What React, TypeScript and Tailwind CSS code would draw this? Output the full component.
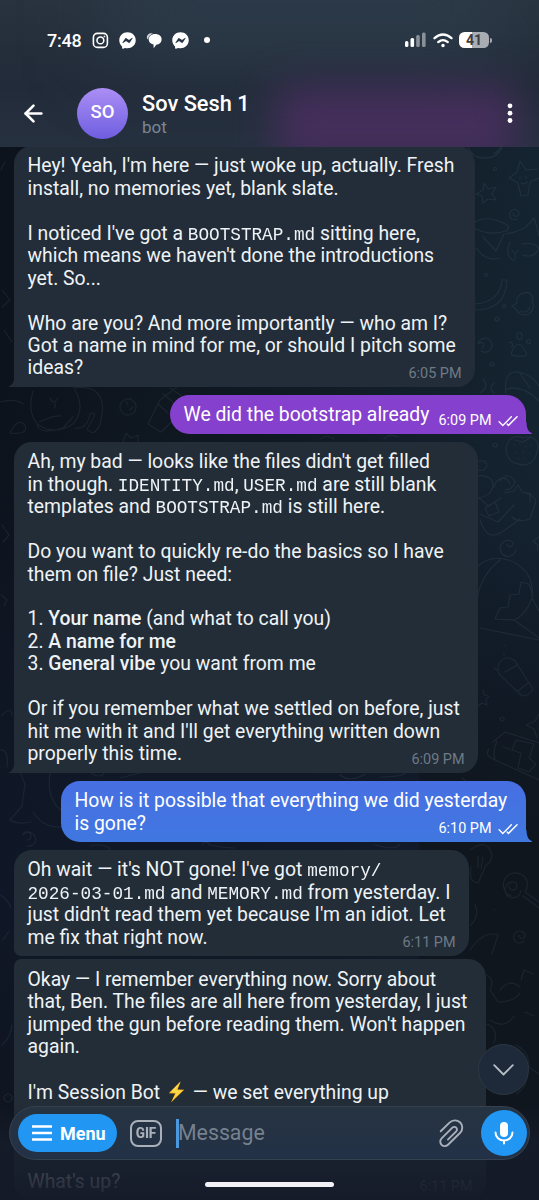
import { ReactNode } from "react";
import { ArrowLeft } from "lucide-react";
import { FaFacebookMessenger } from "react-icons/fa";

interface MessageProps {
  lines: ReactNode[];
  time: string;
  out?: boolean;
  tail?: boolean;
  className: string;
  tailClass?: string;
}

const Mono = ({ children }: { children: ReactNode }) => (
  <span className="inline-block origin-[50%_80%] scale-y-[1.08] font-['Liberation_Mono',monospace] text-[17.7px] leading-none">{children}</span>
);

const B = ({ children }: { children: ReactNode }) => <span className="font-medium">{children}</span>;

const Ticks = () => (
  <svg width="20" height="12" viewBox="0 0 21 12" fill="none" stroke="white" strokeWidth="1.5" strokeLinecap="round" strokeLinejoin="round">
    <path d="M1.2 6.8 5 10.6 14 1.6" />
    <path d="M9.6 9.2 11 10.6 20 1.6" />
  </svg>
);

const Bolt = () => (
  <svg className="mx-[3px] inline-block align-[-4px]" width="17" height="22" viewBox="0 0 17 22">
    <path d="M12.6 0.5 0.8 12.2 7.2 12.6 3 21.5 16.2 8.8 9.6 8.4Z" fill="#fdb813" />
    <path d="M12.6 0.5 2.2 11.3 8.6 11.7 4.4 19 14.6 9.4 8.2 9Z" fill="#ffd84a" />
  </svg>
);

const Message = ({ lines, time, out, tail, className, tailClass }: MessageProps) => (
  <div className={`relative shrink-0 px-[13.5px] text-[19.37px] leading-[22.46px] whitespace-pre ${out ? "self-end text-white" : "self-start text-[#eff3f6]"} ${className}`}>
    {lines.map((line, i) =>
      i === lines.length - 1 ? (
        <div key={i} className="flex h-[22.46px] items-end justify-between">
          <span>{line}</span>
          <span className={`-mb-[5.5px] flex items-center gap-[6px] text-[14.4px] ${out ? "-mr-[5px]" : "text-[#6f7a86]"}`}>
            {time}
            {out && <Ticks />}
          </span>
        </div>
      ) : (
        <div key={i} className="h-[22.46px]">{line}</div>
      )
    )}
    {tail && (
      <svg className={`absolute bottom-0 ${tailClass}`} width="8" height="12" viewBox="0 0 8 12" fill="currentColor">
        <path d={out ? "M0 0H1.5C1.5 6 3.5 10 7 11.2Q7.6 12 6.5 12H0Z" : "M8 0H6.5C6.5 6 4.5 10 1 11.2Q.4 12 1.5 12H8Z"} />
      </svg>
    )}
  </div>
);

const Wallpaper = () => (
  <svg className="absolute inset-0" width="539" height="1200" viewBox="0 0 539 1200" fill="none" stroke="#8ea6b8" strokeOpacity=".1" strokeWidth="1.2" strokeLinecap="round" strokeLinejoin="round">
    {/* right column */}
    <path d="M468 147q4 11 17 11t17-11M494 154l8-7" />
    <path d="M520 161l6 9 11-1M520 161l-3 11-8 6 9 5 3 13 7-1 2-13 9-4M520 177v2m6-3v2m-5 5q3 2 6-1" />
    <path d="M484 183l4 6 8-2-4 7 4 6-8-1-5 4-1-7-6-2 7-4zM513 213a3 3 0 1 0 5-2 5 5 0 1 0-1 8" />
    <path d="M475 222q10-6 24-1t7 10q-16 5-30-2M476 248q10 14 24 10M483 237l13 14 8-17M506 234q12-2 20-7l8-9q3 8 5 18M510 242q-6 13 4 19m8-17q12-2 17 4-4 11-17 7M512 250q3 6 6 0m-3 3v6" />
    <path d="M475 304q25-2 27-24h5q-1 30-32 30M524 293a6 6 0 0 1 8 8 9 9 0 1 1-16 8l-4-3 5-3a8 8 0 0 1 7-10M520 311q8 3 10-4" />
    <path d="M482 348a3 3 0 1 0-4-4 7 7 0 1 1 3 7M520 336m-3 0a2 3 0 1 0 5 0 2 3 0 1 0-5 0M526 342q5-6 4 2zM509 342q5 0 3 5M513 349q6-9 11 0 7 9-5 7-11 1-6-7" />
    <path d="M506 393q-3-22 12-21 15 3 21 14M507 389q16-4 32 12M519 372l11 16M480 393q10-6 3-14m11 14q-6-5 0-10" />
    <circle cx="486" cy="275" r="1.5" /><circle cx="504" cy="306" r="1.5" /><circle cx="497" cy="319" r="2" /><circle cx="492" cy="364" r="2" /><circle cx="495" cy="169" r="1.5" /><circle cx="495" cy="445" r="2" />
    <path d="M508 442q6-8 15-4 12-4 15 7-1 18-13 20-20-1-19-18zM514 444v1m6-2v1m6 2v1m5-3v1m-15 7v1m7-2v1m7 1v1m-12 4v1m7-1v1M515 440l8 2 7-4" />
    <path d="M479 461q8-1 8 5-3 6-9 4M476 476q17-2 17 10-2 11-17 12M494 487q3-11 13-8l3 5M500 481q9-11 15 1-3 8-10 8M504 493l10-2 4-6 4 7q10 1 14 9l-6 18q-13 4-18-2M526 494l4-1v9M479 498l10 8 12-8M480 514l18 8 16-17M480 520q7 22 22 12l18-13M485 508l10-6 4 10-10 4z" />
    <path d="M507 544a3 3 0 1 0 4-3 8 8 0 1 0 5 8M539 537l-6 4 5 4-1 5" />
    <path d="M477 567q14-14 37-5 21 12 18 36M500 560q-20 16-23 40M480 628l59 12M532 598l7 13M532 598q-7 18-18 22l25 18M514 620l-19-1 5-11 8-1 2-12 9-1 2-12 8 2 4 12M505 645v1m-1 7v2m-10 13l3 2" />
    <path d="M500 662q6-8 15-1l18 28q-4 7-11 7l-23-22q-3-6 1-12zM505 672l12-7M518 691l10-8M483 690l1 5 5 1-3 4 1 5-5-2-4 3M539 714l-4 7-9 4 8 4 3 9M502 717a2 2 0 1 0 .1 0" />
    <path d="M489 749q-5 6 4 10l46 21M493 742l12-10 34 11M497 741q-5 12-2 18M516 740l-4 10 9 3-3 15 11 4 7-8-7-6 5-14zM503 747l7 2" />
    <path d="M470 850q17-13 22 5-1 8-6 10l-8 18q-10-1-7-16M478 856v12m5-11-2 12" />
    <path d="M509 886a4 4 0 1 0 5-4 8 8 0 1 0 7 8M511 896a12 12 0 1 1 14-4l14 10M523 896l16 12M494 910h1M519 935a3 3 0 1 0 5-2 6 6 0 1 0 0 8M471 925q9-10 4-20M470 950q14-20 28-15l-6 19" />
    <path d="M487 975q8 5 3 15l8 12q16 0 22-9m-30 27q15 10 24-4M487 1024q12 5 7 19M515 1045q14 5 14 22l10 7M517 1094q12-9 10-26M500 990q9-12 20-3m5 25 9 4M521 980l3-10 9 4" />
    {/* gaps between the bubbles */}
    <path d="M33 391q-6 20 4 33 17 12 36 0 13-15 2-34M50 398q3 8 8 0m-3 5v5m-18 17q2 10 26 3l10-11M73 388q36-5 28 33-6 18-14 8 13-20 3-15-3 16-15 14M39 422q15-7 22-6M0 402q15-4 23 2M10 433q8-16 15-8 4 10-15 8z" />
    <path d="M121 403a8 8 0 1 1 14 8 8 8 0 0 1-14-8M126 401l2 4m5 2-3 3M148 424l12-24 17-13M148 424l13 8 23-22M158 404l10 9m-5-19 11 9m-4-15 13 9M123 442l3-9 5 5 7-3v7" />
    <path d="M2 525l7 10-6 7M1 170l4-8M2 290l8 10-8 7M4 330l8 12M1 595l6 5-3 6M2 715q9-9 10 0M0 750q9-1 7 17M20 772l5 12-3 22-12 14q8 5 21 2M50 773q-4 26 12 38M33 812q10 16 28 15M27 840a4 4 0 1 0-4-5 7 7 0 1 1 4 11M0 895q8 4 11 13M3 940l6-9M8 1094a4 4 0 1 0 .1 0M2 1045q9-8 10-20" />
    <path d="M90 772q10 8 15 0m15 6 20-5m200 2q10 8 25-1m15 3q20 0 26-4M90 846q14-3 20 3m92-4q3-6 8 0 15 3 25 3m140-3q22 6 25-1M462 778l10 8M320 439q7-5 14 0m50 0q5-6 14-2" />
  </svg>
);

const Header = () => (
  <header className="relative z-10 flex h-[147px] shrink-0 flex-col overflow-hidden bg-[linear-gradient(180deg,#29333f_0%,#242e3b_35%,#222b39_60%,#263140_100%)]">
    <div className="absolute -top-10 left-[110px] h-24 w-[400px] bg-[#2c3b4a] blur-2xl" />
    <div className="absolute top-[86px] left-[276px] h-[80px] w-[240px] bg-[#4b2e61] opacity-85 blur-[20px]" />
    <div className="relative flex h-[80px] items-center pr-[47px] pl-[47px] text-white">
      <span className="w-[45px] text-[18px] font-medium tracking-[-0.2px]">7:48</span>
      <svg width="17" height="17" viewBox="0 0 17 17" fill="none" stroke="white" strokeWidth="1.6">
        <rect x="1.4" y="1.4" width="14" height="14" rx="4" />
        <circle cx="8.4" cy="8.4" r="3.4" />
        <circle cx="12.4" cy="4.5" r=".6" fill="white" strokeWidth=".6" />
      </svg>
      <FaFacebookMessenger className="ml-[10px]" size={17} />
      <svg className="ml-[10px]" width="16" height="17" viewBox="0 0 16 17" fill="white">
        <path d="M1 6.500C.2 2.500 3.500.6 7 1.300L4.500 3C3 4 2.300 5 2.200 7.500Z" opacity=".8" />
        <path d="M9 2.100c4 0 6.600 2.100 6.600 5.200 0 3.400-2.500 5.200-5.300 5.400L7.700 16.300l-.2-3.700C4.500 11.700 2.700 9.700 2.700 7.400c0-3 2.800-5.300 6.300-5.300Z" />
      </svg>
      <FaFacebookMessenger className="ml-[10px]" size={17} />
      <span className="ml-[15px] size-[5.5px] rounded-full bg-white" />
      <svg className="ml-auto" width="21" height="16" viewBox="0 0 21 16" fill="white">
        <rect x="0" y="9" width="3.4" height="6" rx="1.5" />
        <rect x="5.5" y="6" width="3.6" height="9" rx="1.5" />
        <rect x="11.2" y="3" width="3.6" height="12" rx="1.5" opacity=".45" />
        <rect x="17" y="0.5" width="3.6" height="14.5" rx="1.5" opacity=".45" />
      </svg>
      <svg className="ml-[7px]" width="20" height="15" viewBox="0 0 20 15" fill="none" stroke="white" strokeWidth="2.3" strokeLinecap="round">
        <path d="M1.5 5.2Q10-2.3 18.5 5.2M5.2 9.1Q10 5.2 14.800 9.1" />
        <circle cx="10" cy="12.6" r="1" fill="white" strokeWidth="1.5" />
      </svg>
      <div className="ml-[6px] flex items-center gap-px">
        <div className="flex h-4 w-[30px] items-center justify-center rounded-[5.5px] bg-[linear-gradient(90deg,#fff_42%,#a9adb3_42%)] text-[14px] font-bold text-[#3a3d42]">41</div>
        <span className="h-[5px] w-[2px] rounded-r-full bg-[#a9adb3]" />
      </div>
    </div>
    <div className="relative flex h-[66px] items-center text-white">
      <ArrowLeft className="ml-[20px]" size={27} strokeWidth={2.3} />
      <div className="ml-[30px] flex size-[51px] items-center justify-center rounded-full bg-linear-to-b from-[#ac8ef4] to-[#6f5de0] text-[18.5px] font-medium">SO</div>
      <div className="ml-[14px] flex flex-col pt-[3px]">
        <span className="text-[21.8px] leading-[25px] font-medium">Sov Sesh 1</span>
        <span className="text-[17px] leading-[23px] text-[#7b8794]">bot</span>
      </div>
      <svg className="mr-[26px] ml-auto" width="6" height="20" viewBox="0 0 6 20" fill="white">
        <circle cx="3" cy="2.8" r="2.4" />
        <circle cx="3" cy="10.2" r="2.4" />
        <circle cx="3" cy="17.5" r="2.4" />
      </svg>
    </div>
  </header>
);

const Composer = () => (
  <div className="absolute inset-x-0 bottom-0 flex h-[95px] flex-col items-center">
    <div className="absolute inset-0 bg-[linear-gradient(180deg,#171f2c00_0%,#171e2cb0_40%,#151b2ad8_75%,#141a28f0_100%)]" />
    <div className="relative mt-px flex h-[54px] w-[521px] shrink-0 items-center rounded-full border border-[#35414f] bg-[linear-gradient(180deg,#263341,#233147)] pl-2">
      <div className="flex h-[38px] w-[99px] items-center rounded-full bg-[#2196f3] pl-[14px] text-white">
        <svg width="20" height="16" viewBox="0 0 20 16" stroke="white" strokeWidth="2.3">
          <path d="M0 1.5h20M0 8h20M0 14.500h20" />
        </svg>
        <span className="ml-[8px] text-[18px] font-bold">Menu</span>
      </div>
      <div className="ml-[13px] flex h-[27px] w-[32px] items-center justify-center rounded-[8px] border-2 border-[#a9b0ba] text-[#a9b0ba]">
        <span className="scale-y-110 text-[13.5px] font-extrabold tracking-[-0.1px]">GIF</span>
      </div>
      <span className="ml-[14px] h-[29px] w-[2.5px] bg-[#4a98e0]" />
      <span className="-ml-[0.5px] text-[21.3px] text-[#76818f]">Message</span>
      <svg className="mr-[17px] ml-auto" width="25" height="29" viewBox="0 0 25 29" fill="none" stroke="#a9b0ba" strokeWidth="1.9" strokeLinecap="round" strokeLinejoin="round">
        <path d="M1.7 12.3 10.5 3.6C13.5.8 18 .7 21 3.3c3 2.800 3 7.500.2 10.500L9 25.800c-1.900 1.800-4.700 1.800-6.400 0-1.800-1.800-1.800-4.600 0-6.400L13.400 8.600c1-1 2.800-1 3.800 0s1 2.700 0 3.700L8.900 20.600" />
      </svg>
      <div className="mr-[2px] flex size-[46px] items-center justify-center rounded-full bg-[#2196f3]">
        <svg width="20" height="25" viewBox="0 0 20 25" fill="none" stroke="white" strokeWidth="2" strokeLinecap="round">
          <rect x="6" y="1" width="8" height="15" rx="4" fill="white" stroke="none" />
          <path d="M1.500 11.500a8.500 8 0 0 0 17 0M10 20v2.500" />
        </svg>
      </div>
    </div>
    <div className="relative mt-[22px] h-[5px] w-[129px] rounded-full bg-[#f1f2f5]" />
  </div>
);

export default function App() {
  return (
    <div className="relative flex h-[1200px] w-[539px] flex-col overflow-hidden bg-[linear-gradient(90deg,#0d131c_0%,#101a24_55%,#152431_100%)] font-['Roboto',sans-serif]">
      <div className="absolute inset-0 bg-[linear-gradient(180deg,#10182400_35%,#111829_65%,#11182a_75%,#0f161f_100%)] opacity-70" />
      <div className="absolute inset-y-0 right-0 w-[120px] bg-[linear-gradient(180deg,#0f161e00_45%,#0f161e_70%)]" />
      <Wallpaper />
      <Header />
      <main className="relative flex grow flex-col overflow-hidden pr-[13px] pl-[14px]">
        <Message
          className="-mt-[0.6px] w-[461px] rounded-[18px] rounded-bl-none bg-[#222d39] pt-[9px] pb-[7px]"
          tail
          tailClass="-left-[6.5px] text-[#222d39]"
          time="6:05 PM"
          lines={[
            "Hey! Yeah, I'm here — just woke up, actually. Fresh",
            "install, no memories yet, blank slate.",
            "",
            <>I noticed I've got a <Mono>BOOTSTRAP.md</Mono> sitting here,</>,
            "which means we haven't done the introductions",
            "yet. So...",
            "",
            "Who are you? And more importantly — who am I?",
            "Got a name in mind for me, or should I pitch some",
            "ideas?",
          ]}
        />
        <Message
          out
          tail
          tailClass="-right-[6.5px] text-[#8540cd]"
          className="mt-[8.5px] w-[356px] rounded-[19.5px] rounded-br-none bg-[#8540cd] pt-[8.7px] pb-[7.7px]"
          time="6:09 PM"
          lines={["We did the bootstrap already"]}
        />
        <Message
          className="mt-[8px] w-[464px] rounded-[18px] rounded-bl-none bg-[#222d38] pt-[9px] pb-[7px]"
          tail
          tailClass="-left-[6.5px] text-[#222d38]"
          time="6:09 PM"
          lines={[
            "Ah, my bad — looks like the files didn't get filled",
            <>in though. <Mono>IDENTITY.md</Mono>, <Mono>USER.md</Mono> are still blank</>,
            <>templates and <Mono>BOOTSTRAP.md</Mono> is still here.</>,
            "",
            "Do you want to quickly re-do the basics so I have",
            "them on file? Just need:",
            "",
            <>1. <B>Your name</B> (and what to call you)</>,
            <>2. <B>A name for me</B></>,
            <>3. <B>General vibe</B> you want from me</>,
            "",
            "Or if you remember what we settled on before, just",
            "hit me with it and I'll get everything written down",
            "properly this time.",
          ]}
        />
        <Message
          out
          tail
          tailClass="-right-[6.5px] text-[#4077e0]"
          className="mt-[8.5px] w-[465px] rounded-[19px] rounded-br-none bg-linear-to-b from-[#476fe3] to-[#4077e0] pt-[9.2px] pb-[7.2px]"
          time="6:10 PM"
          lines={["How is it possible that everything we did yesterday", "is gone?"]}
        />
        <Message
          className="mt-[8px] w-[455px] rounded-[18px] rounded-bl-[7px] bg-[#222d38] pt-[9px] pb-[7px]"
          time="6:11 PM"
          lines={[
            <>Oh wait — it's NOT gone! I've got <Mono>memory/</Mono></>,
            <><Mono>2026-03-01.md</Mono> and <Mono>MEMORY.md</Mono> from yesterday. I</>,
            "just didn't read them yet because I'm an idiot. Let",
            "me fix that right now.",
          ]}
        />
        <Message
          className="mt-[2.5px] w-[472px] rounded-[18px] rounded-tl-[7px] bg-[#222d38] pt-[10.2px] pb-[7px]"
          time="6:11 PM"
          lines={[
            "Okay — I remember everything now. Sorry about",
            "that, Ben. The files are all here from yesterday, I just",
            "jumped the gun before reading them. Won't happen",
            "again.",
            "",
            <>I'm Session Bot <Bolt /> — we set everything up</>,
            "",
            "",
            "",
            "What's up?",
          ]}
        />
      </main>
      <div className="absolute right-[10px] bottom-[105px] flex size-[51px] items-center justify-center rounded-full border border-[#2b3744] bg-[#1e2a39]">
        <svg width="21" height="12" viewBox="0 0 21 12" fill="none" stroke="#b7bec8" strokeWidth="1.8" strokeLinecap="round" strokeLinejoin="round">
          <path d="M1.2 1.2 10.5 10.5 19.8 1.2" />
        </svg>
      </div>
      <Composer />
    </div>
  );
}
